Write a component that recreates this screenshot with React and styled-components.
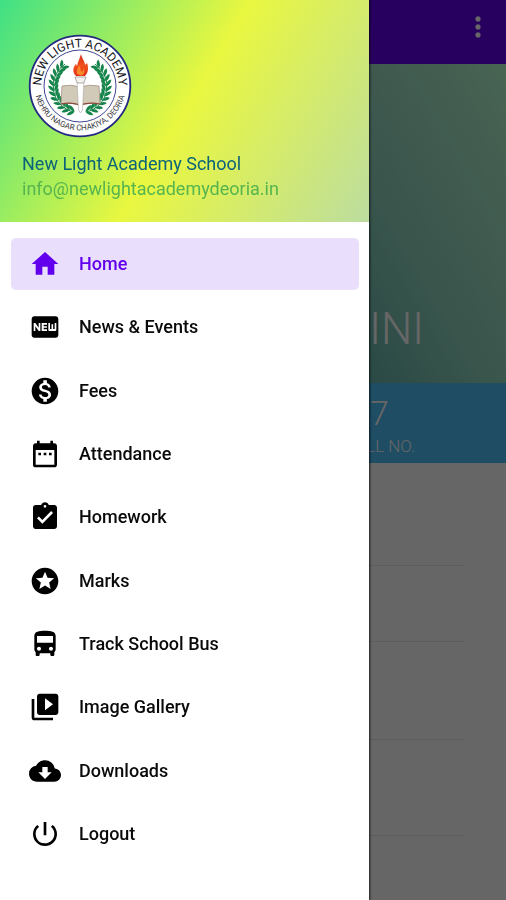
import React from "react";
import styled, { createGlobalStyle } from "styled-components";
import {
  MdAssignmentTurnedIn,
  MdCloudDownload,
  MdDateRange,
  MdDirectionsBus,
  MdFiberNew,
  MdHome,
  MdMonetizationOn,
  MdMoreVert,
  MdPowerSettingsNew,
  MdStars,
  MdVideoLibrary,
} from "react-icons/md";

const GlobalStyle = createGlobalStyle`
  *, *::before, *::after { box-sizing: border-box; }
  body {
    margin: 0;
    background: #fff;
    font-family: Roboto, "Liberation Sans", sans-serif;
  }
`;

const Screen = styled.div`
  position: relative;
  display: flex;
  flex-direction: column;
  min-height: 100vh;
  overflow: hidden;
`;

const AppBar = styled.header`
  display: flex;
  align-items: flex-start;
  justify-content: flex-end;
  height: 64px;
  padding: 11px 12px;
  background: #6200ee;
`;

const OverflowButton = styled.button`
  display: flex;
  padding: 0;
  border: 0;
  background: none;
  color: #fff;
  font-size: 32px;
  cursor: pointer;
`;

const Profile = styled.section`
  display: flex;
  align-items: flex-end;
  justify-content: flex-end;
  height: 319px;
  padding: 0 82px 28px;
  background: linear-gradient(60deg, #5fae8c 30%, #6cb8ae 54%, #8ed4be 70%, #a0e0c6 82%, #b4facd 100%);
`;

const StudentName = styled.h1`
  margin: 0;
  color: #fff;
  font-size: 44px;
  line-height: 52px;
  font-weight: 300;
`;

const Stats = styled.dl`
  display: grid;
  grid-template-columns: 1fr 1fr;
  height: 80px;
  margin: 0;
  background: #4dc0fa;
`;

const Stat = styled.div`
  grid-column: 2;
  display: flex;
  flex-direction: column-reverse;
  align-items: center;
  justify-content: flex-end;
  padding-top: 10px;
  color: #fff;
  font-weight: 300;
`;

const StatLabel = styled.dt`
  font-size: 17px;
  line-height: 26px;
`;

const StatValue = styled.dd`
  margin: 0;
  font-size: 34px;
  line-height: 40px;
`;

const Details = styled.div`
  flex: 1;
  padding: 0 42px;
  background: #fff;
`;

const DetailRow = styled.div`
  height: ${(p) => p.$height}px;
  border-bottom: 1px solid #e8e8e8;
`;

const Scrim = styled.div`
  position: fixed;
  inset: 0;
  background: rgba(0, 0, 0, 0.6);
`;

const Drawer = styled.aside`
  position: absolute;
  top: 0;
  left: 0;
  display: flex;
  flex-direction: column;
  width: 369px;
  max-width: 100%;
  min-height: 100%;
  background: #fff;
  box-shadow: 1px 0 2px rgba(0, 0, 0, 0.7);
`;

const DrawerHeader = styled.div`
  display: flex;
  flex-direction: column;
  align-items: flex-start;
  height: 222px;
  padding: 34px 22px 0;
  background: linear-gradient(121deg, #3fe085 0%, #e9f740 50%, #bcdd9f 100%);
`;

const LogoBox = styled.div`
  margin: 0 0 14px 6px;

  svg {
    display: block;
    width: 104px;
    height: 104px;
  }
`;

const SchoolName = styled.div`
  color: #0b6478;
  font-size: 18px;
  line-height: 24px;
`;

const SchoolEmail = styled.a`
  color: #56b54e;
  font-size: 18px;
  line-height: 26px;
  text-decoration: none;
`;

const Menu = styled.nav`
  flex: 1;
  display: flex;
  flex-direction: column;
  justify-content: space-between;
  padding: 16px 10px 40px 11px;
`;

const MenuItem = styled.a`
  display: flex;
  align-items: center;
  gap: 18px;
  height: 52px;
  padding: 0 18px;
  border-radius: 5px;
  background: ${(p) => (p.$active ? "#e9dffc" : "transparent")};
  color: ${(p) => (p.$active ? "#6200ee" : "#0a0a0a")};
  font-size: 18px;
  line-height: 24px;
  font-weight: 500;
  text-decoration: none;

  svg {
    flex: none;
    width: 32px;
    height: 32px;
    color: ${(p) => (p.$active ? "#6200ee" : "#000")};
  }
`;

const MENU = [
  { label: "Home", Icon: MdHome, active: true },
  { label: "News & Events", Icon: MdFiberNew },
  { label: "Fees", Icon: MdMonetizationOn },
  { label: "Attendance", Icon: MdDateRange },
  { label: "Homework", Icon: MdAssignmentTurnedIn },
  { label: "Marks", Icon: MdStars },
  { label: "Track School Bus", Icon: MdDirectionsBus },
  { label: "Image Gallery", Icon: MdVideoLibrary },
  { label: "Downloads", Icon: MdCloudDownload },
  { label: "Logout", Icon: MdPowerSettingsNew },
];

const DETAIL_HEIGHTS = [103, 76, 98, 96];

// Leaves fan out on both sides of a stem that follows the inner ring.
function Laurel() {
  const leaves = [];
  for (let i = 0; i < 12; i += 1) {
    const deg = 102 + i * 11;
    const a = (deg * Math.PI) / 180;
    const x = 52 + 26 * Math.cos(a);
    const y = 52 + 26 * Math.sin(a);
    leaves.push(
      <g key={i} transform={`translate(${x.toFixed(2)} ${y.toFixed(2)}) rotate(${deg + 90})`}>
        <path d="M0 0Q2-5 7-5.200Q6 0 0 0Z" />
        <path d="M0 0Q2 5 7 5.200Q6 0 0 0Z" />
      </g>
    );
  }
  return (
    <g fill="#16854b">
      <path d="M46 78A26.500 26.500 0 0 1 37 30" fill="none" stroke="#16854b" strokeWidth="1" />
      {leaves}
    </g>
  );
}

function SchoolLogo() {
  return (
    <svg viewBox="0 0 104 104" role="img" aria-label="New Light Academy">
      <defs>
        <path id="arcTop" d="M13.500 56A38.700 38.700 0 1 1 90.500 56" />
        <path id="arcBottom" d="M7.500 62A46 46 0 0 0 96.500 62" />
        <linearGradient id="flame" x1="0" y1="0" x2="0" y2="1">
          <stop offset="0" stopColor="#d9301d" />
          <stop offset="0.55" stopColor="#f0501c" />
          <stop offset="1" stopColor="#e02d1a" />
        </linearGradient>
      </defs>
      <circle cx="52" cy="52" r="50.300" fill="#fff" stroke="#242a80" strokeWidth="1.800" />
      <circle cx="52" cy="52" r="36" fill="#fff" stroke="#2b3187" strokeWidth="0.900" />
      <text fill="#16161c" fontFamily="Roboto, sans-serif" fontSize="12">
        <textPath href="#arcTop" startOffset="50%" textAnchor="middle">
          NEW LIGHT ACADEMY
        </textPath>
      </text>
      <text fill="#3a3a42" fontFamily="Roboto, sans-serif" fontSize="8">
        <textPath href="#arcBottom" startOffset="50%" textAnchor="middle">
          NEHRU NAGAR CHAKIYA, DEORIA
        </textPath>
      </text>
      <Laurel />
      <g transform="matrix(-1 0 0 1 104 0)">
        <Laurel />
      </g>
      <path
        d="M34 52Q43 50 52 53Q61 50 71 52L72 70Q61 68 52 71Q43 68 33 70Z"
        fill="#d2cab9"
        stroke="#a3917f"
        strokeWidth="0.800"
      />
      <path d="M33 70Q43 68 52 71Q61 68 72 70" fill="none" stroke="#8b4a3c" strokeWidth="1.200" />
      <path d="M49 47H56L54.500 76L52.500 79L50.500 76Z" fill="#fff" stroke="#aaa6a3" strokeWidth="0.600" />
      <path d="M47 43H58L57 46L55.500 49H49.500L48 46Z" fill="#f4f2f0" stroke="#8d8987" strokeWidth="0.700" />
      <path
        d="M48 42C44 38 45 33 48 30L49 32C50 27 52 24 53 20C54 25 57 27 57 31L59 29C61 34 60 39 57 42Z"
        fill="url(#flame)"
      />
      <path d="M49 40C48 36 50 35 51 31C53 34 52 36 54 38L56 34C57 38 56 41 53 41.500Z" fill="#f98a2b" />
    </svg>
  );
}

export default function App() {
  return (
    <Screen>
      <GlobalStyle />
      <AppBar>
        <OverflowButton type="button" aria-label="More options">
          <MdMoreVert />
        </OverflowButton>
      </AppBar>
      <Profile>
        <StudentName>LINI</StudentName>
      </Profile>
      <Stats>
        <Stat>
          <StatLabel>ROLL NO.</StatLabel>
          <StatValue>7</StatValue>
        </Stat>
      </Stats>
      <Details>
        {DETAIL_HEIGHTS.map((height, i) => (
          <DetailRow key={i} $height={height} />
        ))}
      </Details>
      <Scrim />
      <Drawer>
        <DrawerHeader>
          <LogoBox>
            <SchoolLogo />
          </LogoBox>
          <SchoolName>New Light Academy School</SchoolName>
          <SchoolEmail href="mailto:info@newlightacademydeoria.in">info@newlightacademydeoria.in</SchoolEmail>
        </DrawerHeader>
        <Menu aria-label="Main">
          {MENU.map(({ label, Icon, active }) => (
            <MenuItem key={label} href="#" $active={active} aria-current={active ? "page" : undefined}>
              <Icon aria-hidden="true" />
              {label}
            </MenuItem>
          ))}
        </Menu>
      </Drawer>
    </Screen>
  );
}
